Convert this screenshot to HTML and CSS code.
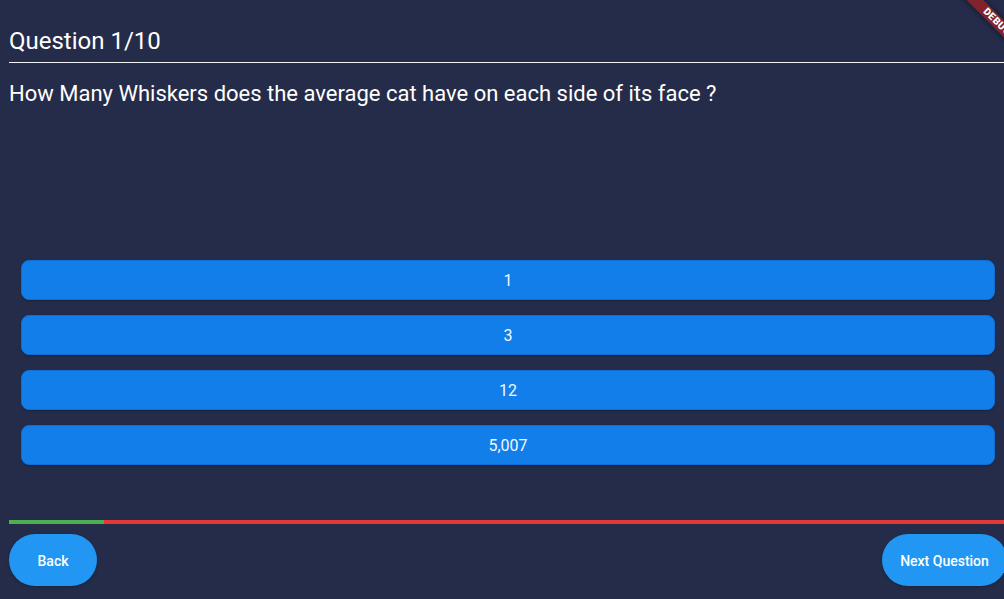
FILE: index.html
```html
<!DOCTYPE html>
<html lang="en">
<head>
<meta charset="utf-8">
<title>Quiz</title>
<link rel="stylesheet" href="styles.css">
</head>
<body>
<div class="app">
  <h1 class="title">Question 1/10</h1>
  <div class="divider"></div>
  <p class="question">How Many Whiskers does the average cat have on each side of its face ?</p>
  <div class="options">
    <button class="option">1</button>
    <button class="option">3</button>
    <button class="option">12</button>
    <button class="option">5,007</button>
  </div>
  <div class="progress"><div class="progress-fill" style="width:95px"></div></div>
  <div class="nav">
    <button class="nav-btn back">Back</button>
    <button class="nav-btn next">Next Question</button>
  </div>
  <div class="debug-banner">DEBUG</div>
</div>
</body>
</html>
```
FILE: styles.css
```css
html, body {
  margin: 0;
  padding: 0;
  width: 1004px;
  height: 599px;
  overflow: hidden;
  background: #252c4a;
}
.app {
  position: relative;
  width: 1016px;
  height: 599px;
  box-sizing: border-box;
  padding: 27px 9px 0 9px;
  font-family: Roboto, "Liberation Sans", sans-serif;
  color: #ffffff;
  overflow: hidden;
}
.title {
  margin: 0;
  font-size: 24px;
  line-height: 28px;
  font-weight: 400;
}
.divider {
  margin-top: 7px;
  height: 1px;
  background: #f2f3f6;
}
.question {
  margin: 18px 0 0 0;
  font-size: 22px;
  line-height: 26px;
  font-weight: 400;
}
.options {
  margin-top: 153px;
  padding: 0 12px;
  display: flex;
  flex-direction: column;
  gap: 15px;
}
.option {
  height: 40px;
  border: 1px solid #0f6fd4;
  border-radius: 8px;
  background: #127eea;
  color: #f4f7ff;
  font-family: Roboto, "Liberation Sans", sans-serif;
  font-size: 16px;
  padding: 0;
  box-shadow: 0 1px 2px rgba(0,0,0,0.25);
}
.progress {
  margin-top: 55px;
  height: 4px;
  background: #e53935;
}
.progress-fill {
  height: 100%;
  background: #4caf50;
}
.nav {
  margin-top: 10px;
  display: flex;
  justify-content: space-between;
}
.nav-btn {
  height: 52px;
  border: none;
  border-radius: 26px;
  background: #2196f3;
  color: #ffffff;
  font-family: Roboto, "Liberation Sans", sans-serif;
  font-size: 14px;
  font-weight: 500;
  padding: 2px 0 0 0;
  box-shadow: 0 1px 3px rgba(0,0,0,0.25);
}
.back { width: 88px; }
.next { width: 125px; }
.debug-banner {
  position: absolute;
  left: 937px;
  top: 16px;
  width: 120px;
  height: 12px;
  transform: rotate(45deg);
  background: rgba(183, 28, 28, 0.63);
  box-shadow: 0 0 6px rgba(0,0,0,0.5);
  color: #ffffff;
  font-family: Roboto, "Liberation Sans", sans-serif;
  font-size: 10px;
  font-weight: 900;
  line-height: 12px;
  text-align: center;
  letter-spacing: 0.5px;
}
```
